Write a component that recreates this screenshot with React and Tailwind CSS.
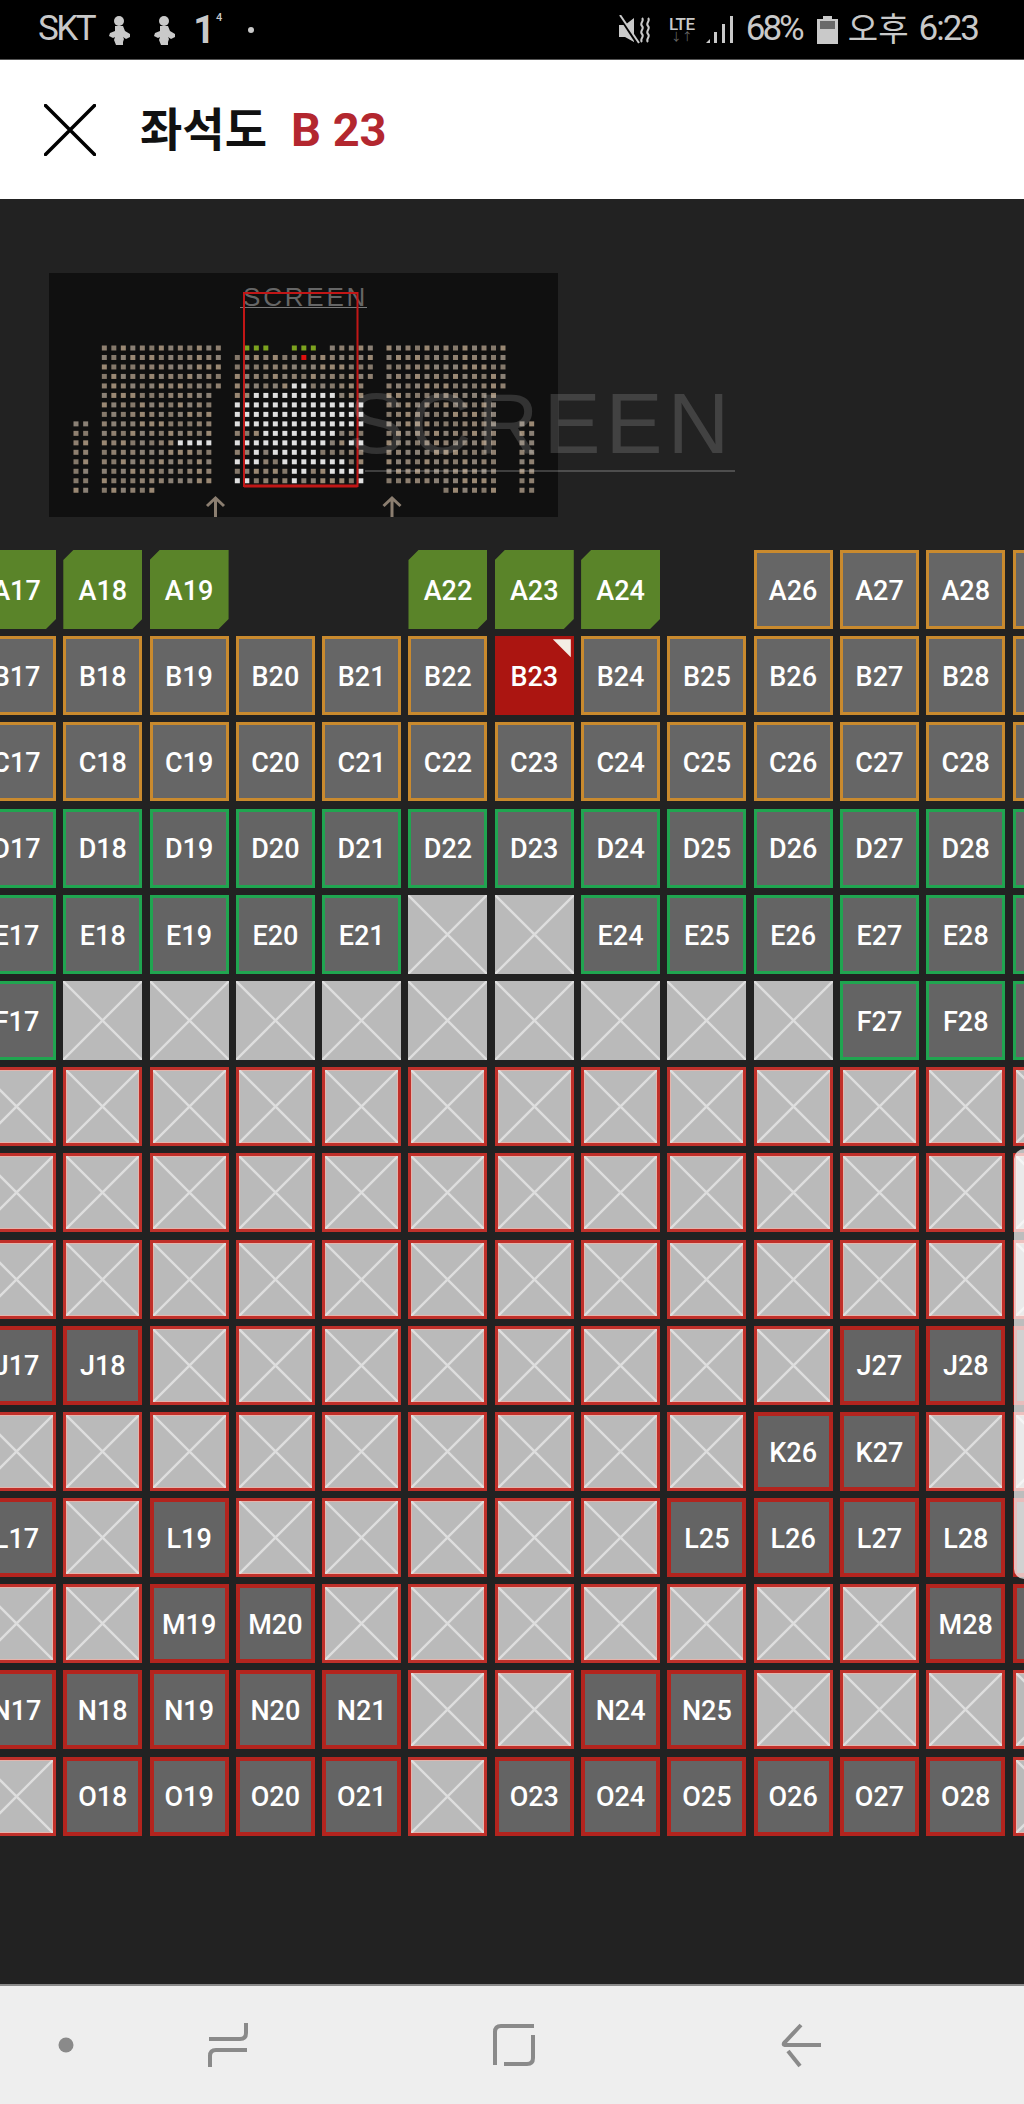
const ROWS = {
  A: "ggg__ggg_oooo",
  B: "oooooosoooooo",
  C: "ooooooooooooo",
  D: "ddddddddddddd",
  E: "dddddxxdddddd",
  F: "dxxxxxxxxxddd",
  G: "yyyyyyyyyyyyy",
  H: "yyyyyyyyyyyyy",
  I: "yyyyyyyyyyyyy",
  J: "rryyyyyyyyrrr",
  K: "yyyyyyyyyrryy",
  L: "ryryyyyyrrrrr",
  M: "yyrryyyyyyyrr",
  N: "rrrrryyrryyyy",
  O: "yrrrryrrrrrry",
};

function Cross() {
  return (
    <svg className="absolute inset-0 h-full w-full" viewBox="0 0 100 100" preserveAspectRatio="none">
      <path d="M0 0L100 100M100 0L0 100" stroke="#dedede" strokeWidth="2.4" vectorEffect="non-scaling-stroke" fill="none" />
    </svg>
  );
}

function Seat({ kind, label }) {
  const text = "flex h-[79px] w-[79px] items-center justify-center pt-[3px] text-[27px] font-medium text-white";
  if (kind === "_") return <div className="h-[79px] w-[79px]" />;
  if (kind === "g")
    return (
      <div className={`${text} bg-[#5a8429] [clip-path:polygon(10px_0,100%_0,100%_calc(100%-10px),calc(100%-10px)_100%,0_100%,0_10px)]`}>
        {label}
      </div>
    );
  if (kind === "o") return <div className={`${text} border-[3px] border-[#c98a2e] bg-[#666666]`}>{label}</div>;
  if (kind === "d") return <div className={`${text} border-[3px] border-[#20a550] bg-[#646464]`}>{label}</div>;
  if (kind === "r") return <div className={`${text} border-[4px] border-[#b3241e] bg-[#646464]`}>{label}</div>;
  if (kind === "s")
    return (
      <div className={`${text} relative bg-[#ab1511]`}>
        {label}
        <div className="absolute right-[3px] top-[3px] h-[18px] w-[18px] bg-[#f3eee4] [clip-path:polygon(0_0,100%_0,100%_100%)]" />
      </div>
    );
  if (kind === "x")
    return (
      <div className="relative h-[79px] w-[79px] bg-[#bababa]">
        <Cross />
      </div>
    );
  return (
    <div className="relative h-[79px] w-[79px] border-[3px] border-[#c0302a] bg-[#bababa] shadow-[inset_0_0_0_1px_#e6b4ac]">
      <Cross />
    </div>
  );
}

function SeatMap() {
  return (
    <div className="mt-[33px] overflow-hidden">
      <div className="ml-[-23px] grid w-[1200px] grid-cols-[repeat(13,79px)] gap-x-[7.3px] gap-y-[7.2px]">
        {Object.entries(ROWS).flatMap(([row, codes]) =>
          codes.split("").map((c, i) => <Seat key={row + i} kind={c} label={`${row}${17 + i}`} />)
        )}
      </div>
    </div>
  );
}

const TANS = ["#8f8070", "#85796b", "#9a8873", "#8a8075"];

function dots() {
  const out = [];
  const add = (zx, zy, fill) => out.push({ x: 40 + zx / 3, y: 260 + zy / 3, fill });
  const yOf = (r) => 264 + r * 28.45;
  const tan = (a, b) => TANS[(a * 3 + b * 5 + (a * b) % 3) % 4];
  const white = {
    4: [6, 7],
    5: [2, 3, 4, 5, 6, 7, 8, 9, 10],
    6: [0, 1, 2, 3, 4, 5, 6, 7, 8, 9, 10, 11, 12, 13],
    7: [0, 1, 2, 3, 4, 5, 6, 7, 8, 9, 10, 11, 12, 13],
    8: [0, 1, 2, 3, 4, 5, 6, 7, 8, 9, 10, 11, 12, 13],
    9: [3, 4, 5, 6, 7, 8, 9, 10],
    10: [0, 1, 2, 3, 4, 5, 6, 7, 8, 9, 12, 13],
    11: [2, 4, 5, 6, 7, 8],
    12: [0, 1, 2, 5, 6, 7, 8, 9, 10, 11],
    13: [6, 7, 10, 11, 12, 13],
    14: [0, 1, 6, 13],
  };
  for (let r = 0; r < 16; r++) {
    const n = r < 5 ? 13 : r < 15 ? 12 : 6;
    for (let c = 0; c < n; c++) {
      const isW = r === 10 && c >= 8 && c <= 11;
      add(193 + c * 28.5, yOf(r), isW ? "#e0e0e0" : tan(r, c));
    }
    if (r >= 8) {
      add(108, yOf(r), tan(r, 1));
      add(137, yOf(r), tan(r, 2));
      add(1446, yOf(r), tan(r, 3));
      add(1475, yOf(r), tan(r, 4));
    }
    const m = r < 5 ? 13 : 12;
    for (let c = 0; c < m; c++) {
      if (r === 15 && (c < 6 || c > 11)) continue;
      add(1047 + c * 28.5, yOf(r), tan(r, c + 2));
    }
    if (r <= 14) {
      const k = r < 4 ? 15 : 14;
      for (let c = 0; c < k; c++) {
        if (r === 0 && (c === 0 || c === 4 || c === 5 || c === 9)) continue;
        let fill = tan(r, c + 1);
        if (r === 0 && [1, 2, 3, 6, 7, 8].includes(c)) fill = "#7da31f";
        if (r === 1 && c === 7) fill = "#e0110f";
        if (white[r] && white[r].includes(c)) fill = "#e0e0e0";
        add(592 + c * 28.5, yOf(r), fill);
      }
    }
  }
  return out;
}

function MiniMap() {
  return (
    <div className="relative ml-[49px] mt-[74px] h-[244px] w-[509px] bg-[#101010]">
      <div className="absolute left-[194px] top-[8px] font-['Liberation_Sans',sans-serif] text-[26px] leading-[32px] tracking-[2.8px] text-[#666666]">
        SCREEN
      </div>
      <div className="absolute left-[191px] top-[34px] h-[1px] w-[127px] bg-[#7a7a7a]" />
      <svg className="absolute inset-0 h-full w-full" viewBox="49 273 509 244">
        {dots().map((d, i) => (
          <rect key={i} x={d.x - 2.5} y={d.y - 2.5} width="5" height="5" fill={d.fill} />
        ))}
        <path d="M244 293H357.5V486H244Z" fill="none" stroke="#c11616" strokeWidth="2" />
        <path d="M244 486H357.5" fill="none" stroke="#c11616" strokeWidth="3" />
        <path d="M215.5 517V498M207 506L215.5 498L224 506" fill="none" stroke="#8b7e70" strokeWidth="3" />
        <path d="M392 517V498M383.5 506L392 498L400.5 506" fill="none" stroke="#8b7e70" strokeWidth="3" />
      </svg>
    </div>
  );
}

function Woman() {
  return (
    <svg width="22" height="30" viewBox="0 0 22 30" fill="#c9c9c9">
      <circle cx="10" cy="6" r="5" />
      <path d="M6 11h8l2 5 5 3v3l-4 2-3-2 1 2-1 3v3H7l-2-5 1-3-2 1-4-2 1-3 5-2z" />
    </svg>
  );
}

function StatusBar() {
  return (
    <div className="flex h-[60px] items-center justify-between border-b border-[#555] bg-black pl-[38px] pr-[46px] font-['Roboto','Noto_Sans_CJK_KR',sans-serif] text-[35px] font-normal text-[#c9c9c9]">
      <div className="flex items-center">
        <span className="tracking-[-2.500px]">SKT</span>
        <span className="ml-[15px]"><Woman /></span>
        <span className="ml-[23px]"><Woman /></span>
        <span className="ml-[17px] flex items-start font-medium">
          <span className="text-[38px] font-bold leading-[38px]">1</span>
          <span className="ml-[1px] text-[11px] leading-[14px]">4</span>
        </span>
        <span className="ml-[26px] h-[6px] w-[6px] rounded-full bg-[#c9c9c9]" />
      </div>
      <div className="flex items-center">
        <svg width="33" height="30" viewBox="0 0 33 30" fill="#c9c9c9">
          <path d="M1 10h6l9-7v24l-9-5H1z" />
          <path d="M2 2l17 26" stroke="#000" strokeWidth="3" />
          <path d="M2 0l19 28" stroke="#c9c9c9" strokeWidth="2" />
          <path d="M24 3c3 3-3 5 0 8s-3 5 0 8-3 5 0 8M30 3c3 3-3 5 0 8s-3 5 0 8-3 5 0 8" stroke="#c9c9c9" strokeWidth="2" fill="none" />
        </svg>
        <div className="ml-[15px] flex w-[32px] flex-col items-center">
          <span className="text-[17px] font-medium leading-[16px] tracking-[-0.500px]">LTE</span>
          <span className="text-[11px] leading-[11px] text-[#666]">↓↑</span>
        </div>
        <svg className="ml-[8px]" width="30" height="30" viewBox="0 0 30 30" fill="#c9c9c9">
          <path d="M0 28L4 24V28Z" />
          <rect x="8" y="17" width="3" height="11" />
          <rect x="16" y="9" width="3" height="19" />
          <rect x="24" y="1" width="3" height="27" />
        </svg>
        <span className="ml-[10px] tracking-[-3px]">68%</span>
        <svg className="ml-[15px]" width="21" height="28" viewBox="0 0 21 28">
          <path d="M6 0h9v3h6v25H0V3h6z" fill="#c9c9c9" />
          <rect x="3" y="5" width="15" height="8" fill="#6a6a6a" />
        </svg>
        <span className="ml-[10px] text-[33px] font-normal">오후</span>
        <span className="ml-[10px] tracking-[-2px]">6:23</span>
      </div>
    </div>
  );
}

function Header() {
  return (
    <div className="flex h-[139px] items-center bg-white pl-[44px] font-['Roboto','Noto_Sans_CJK_KR',sans-serif]">
      <svg width="52" height="52" viewBox="0 0 52 52" fill="none">
        <path d="M1.500 1.500L50.500 50.500M50.500 1.500L1.500 50.500" stroke="#000" strokeWidth="3.500" strokeLinecap="round" />
      </svg>
      <span className="ml-[44px] text-[46px] font-bold leading-none text-[#111]">좌석도</span>
      <span className="ml-[24px] text-[47px] font-bold leading-none text-[#b3272f]">B 23</span>
    </div>
  );
}

function NavBar() {
  return (
    <div className="h-[120px] border-t-2 border-[#8a8a8a] bg-[#eeeeee]">
      <svg className="h-[118px] w-full" viewBox="0 1986 1024 118" fill="none" stroke="#8a8a8a" strokeWidth="4">
        <circle cx="66" cy="2045" r="7.500" fill="#8a8a8a" stroke="none" />
        <path d="M209 2039H240Q246 2039 246 2033V2023" />
        <path d="M247 2050H216Q210 2050 210 2056V2067" />
        <path d="M534 2026H501Q495 2026 495 2032V2065" />
        <path d="M533 2035V2058Q533 2064 527 2064H504" />
        <path d="M801 2025L785 2042Q782 2045 786 2045H821" />
        <path d="M788 2051L800 2066" />
      </svg>
    </div>
  );
}

export default function App() {
  return (
    <div className="flex h-[2104px] w-[1024px] flex-col overflow-hidden bg-[#222222] font-['Roboto','Noto_Sans_CJK_KR',sans-serif]">
      <StatusBar />
      <Header />
      <div className="relative flex-1 overflow-hidden bg-[#222222]">
        <MiniMap />
        <SeatMap />
        <div className="absolute left-[348px] top-[176px] font-['Liberation_Sans',sans-serif] text-[85px] leading-[98px] tracking-[5.4px] text-white/15">
          SCREEN
        </div>
        <div className="absolute left-[365px] top-[271px] h-[2px] w-[370px] bg-white/20" />
        <div className="absolute right-0 top-[950px] h-[430px] w-[10px] rounded-l-[10px] bg-white/70" />
      </div>
      <NavBar />
    </div>
  );
}
